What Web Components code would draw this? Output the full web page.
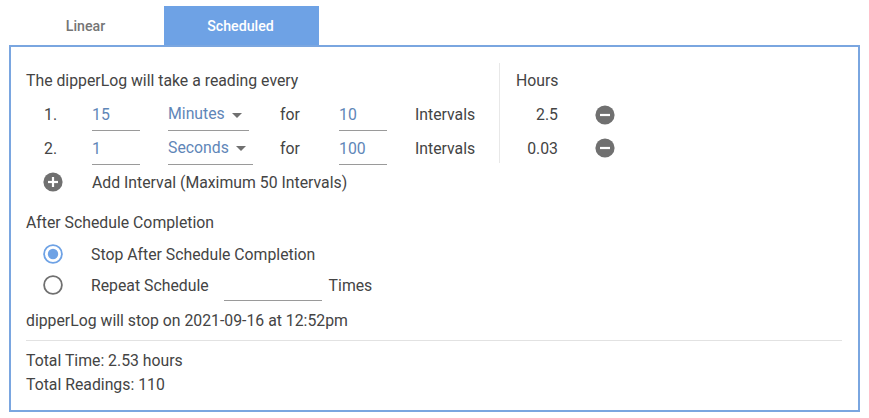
<!DOCTYPE html>
<html>
<head>
<meta charset="utf-8">
<style>
  html, body { margin: 0; background: #fff; }
  body { font-family: Roboto, "Liberation Sans", sans-serif; font-size: 15.8px; color: #444; }
</style>
</head>
<body>
<schedule-app></schedule-app>

<script>
class TabBar extends HTMLElement {
  constructor() {
    super();
    this.attachShadow({ mode: 'open' });
    this.shadowRoot.innerHTML = `
      <style>
        :host { display: flex; height: 39px; padding: 6px 0 0 9px; }
        div {
          width: 155px;
          display: flex;
          align-items: center;
          justify-content: center;
          font-size: 14.2px;
          font-weight: 500;
          color: #757575;
          padding-right: 2px;
          box-sizing: border-box;
        }
        div.on { background: #6ea2e5; color: #fff; }
      </style>
      <div>Linear</div>
      <div class="on">Scheduled</div>
    `;
  }
}

class RoundIcon extends HTMLElement {
  constructor() {
    super();
    this.attachShadow({ mode: 'open' });
    const plus = this.getAttribute('type') === 'plus';
    this.shadowRoot.innerHTML = `
      <style>
        :host { display: block; width: 20px; height: 20px; }
        svg { display: block; }
      </style>
      <svg width="20" height="20" viewBox="0 0 20 20">
        <circle cx="10" cy="10" r="9.6" fill="#707070"/>
        <rect x="5" y="8.9" width="10" height="2.2" fill="#fff"/>
        ${plus ? '<rect x="8.9" y="5" width="2.2" height="10" fill="#fff"/>' : ''}
      </svg>
    `;
  }
}

class LineField extends HTMLElement {
  constructor() {
    super();
    this.attachShadow({ mode: 'open' });
    this.shadowRoot.innerHTML = `
      <style>
        :host {
          display: flex;
          align-items: center;
          box-sizing: border-box;
          height: 32px;
          margin-top: 1px;
          color: #5f86b8;
          border-bottom: 1px solid #9a9a9a;
        }
      </style>
      <slot></slot>
    `;
  }
}

class UnitSelect extends HTMLElement {
  constructor() {
    super();
    this.attachShadow({ mode: 'open' });
    this.shadowRoot.innerHTML = `
      <style>
        :host {
          display: inline-flex;
          align-items: center;
          box-sizing: border-box;
          height: 32px;
          margin-top: 1px;
          padding-bottom: 2px;
          color: #5f86b8;
          border-bottom: 1px solid #9a9a9a;
        }
        svg { display: block; flex: none; margin: 3px 7px 0 7.5px; }
      </style>
      <slot></slot>
      <svg width="10" height="5" viewBox="0 0 10 5"><path d="M0 0h10L5 5z" fill="#707070"/></svg>
    `;
  }
}

class IntervalRow extends HTMLElement {
  constructor() {
    super();
    this.attachShadow({ mode: 'open' });
    const a = n => this.getAttribute(n) || '';
    this.shadowRoot.innerHTML = `
      <style>
        :host {
          display: grid;
          grid-template-columns: 66px 48px 28px 112px 59px 48px 28px 84px 59px 37px 20px;
          height: 34px;
          align-items: center;
        }
        .num { padding-left: 18px; }
        .sel { grid-column: 4; justify-self: start; }
        .for { grid-column: 5; }
        .n2 { grid-column: 6; }
        .label { grid-column: 8; }
        .hours { grid-column: 9; align-self: start; text-align: right; border-left: 1px solid #e8e8e8; height: 100%; line-height: 35px; box-sizing: border-box; }
        :host([last]) .hours { height: 32px; }
        round-icon { grid-column: 11; }
      </style>
      <div class="num">${a('index')}.</div>
      <line-field>${a('every')}</line-field>
      <unit-select class="sel">${a('unit')}</unit-select>
      <div class="for">for</div>
      <line-field class="n2">${a('count')}</line-field>
      <div class="label">Intervals</div>
      <div class="hours">${a('hours')}</div>
      <round-icon type="minus"></round-icon>
    `;
  }
}

class RadioOption extends HTMLElement {
  constructor() {
    super();
    this.attachShadow({ mode: 'open' });
    const on = this.hasAttribute('checked');
    this.shadowRoot.innerHTML = `
      <style>
        :host { display: flex; align-items: center; box-sizing: border-box; height: 31px; padding: 2px 0 0 17px; }
        svg { display: block; margin: -2px 28px 0 0; flex: none; }
      </style>
      <svg width="20" height="20" viewBox="0 0 20 20">
        <circle cx="10" cy="10" r="8.9" fill="none" stroke="${on ? '#6ea2e5' : '#707070'}" stroke-width="1.8"/>
        ${on ? '<circle cx="10" cy="10" r="5.2" fill="#6ea2e5"/>' : ''}
      </svg>
      <slot></slot>
    `;
  }
}

class SchedulePanel extends HTMLElement {
  constructor() {
    super();
    this.attachShadow({ mode: 'open' });
    this.shadowRoot.innerHTML = `
      <style>
        :host {
          display: block;
          box-sizing: border-box;
          width: 851px;
          height: 367px;
          margin-left: 9px;
          padding: 16px 15px 0;
          border: 2px solid #7aa6e0;
        }
        .head { display: grid; grid-template-columns: 473px 1fr; height: 34px; align-items: center; }
        .head span:last-child { padding-left: 16px; border-left: 1px solid #e8e8e8; height: 100%; line-height: 35px; }
        .add { display: flex; align-items: center; height: 34px; padding-left: 17px; }
        .add round-icon { margin-right: 29px; }
        .title { display: flex; align-items: center; height: 20px; margin-top: 13px; margin-bottom: 6px; }
        .gap { display: inline-block; width: 98px; height: 31px; box-sizing: border-box; margin: 0 7px 0 15px; border-bottom: 1px solid #9a9a9a; }
        .stop { display: flex; align-items: center; height: 20px; margin-top: 10px; }
        hr { border: 0; border-top: 1px solid #e2e2e2; margin: 10px 1px 0 0; }
        .totals { margin-top: 8px; line-height: 24px; }
      </style>
      <div class="head"><span>The dipperLog will take a reading every</span><span>Hours</span></div>
      <interval-row index="1" every="15" unit="Minutes" count="10" hours="2.5"></interval-row>
      <interval-row index="2" every="1" unit="Seconds" count="100" hours="0.03" last></interval-row>
      <div class="add"><round-icon type="plus"></round-icon><span>Add Interval (Maximum 50 Intervals)</span></div>
      <div class="title">After Schedule Completion</div>
      <radio-option checked>Stop After Schedule Completion</radio-option>
      <radio-option>Repeat Schedule <span class="gap"></span> Times</radio-option>
      <div class="stop">dipperLog will stop on 2021-09-16 at 12:52pm</div>
      <hr>
      <div class="totals">Total Time: 2.53 hours<br>Total Readings: 110</div>
    `;
  }
}

class ScheduleApp extends HTMLElement {
  constructor() {
    super();
    this.attachShadow({ mode: 'open' });
    this.shadowRoot.innerHTML = `
      <style>:host { display: block; }</style>
      <tab-bar></tab-bar>
      <schedule-panel></schedule-panel>
    `;
  }
}

customElements.define('tab-bar', TabBar);
customElements.define('round-icon', RoundIcon);
customElements.define('line-field', LineField);
customElements.define('unit-select', UnitSelect);
customElements.define('interval-row', IntervalRow);
customElements.define('radio-option', RadioOption);
customElements.define('schedule-panel', SchedulePanel);
customElements.define('schedule-app', ScheduleApp);
</script>
</body>
</html>
